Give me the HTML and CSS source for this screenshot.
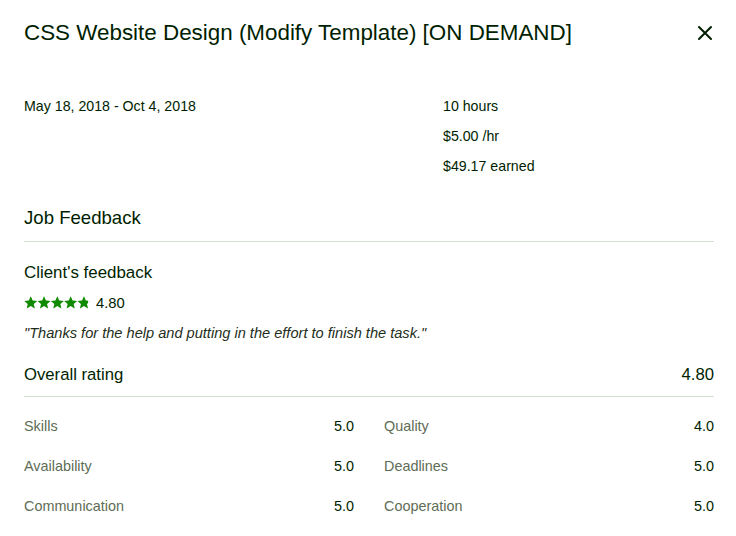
FILE: index.html
```html
<!DOCTYPE html>
<html>
<head>
<meta charset="utf-8">
<link rel="stylesheet" href="styles.css">
</head>
<body>
<div class="modal">
  <div class="header">
    <h1 class="title">CSS Website Design (Modify Template) [ON DEMAND]</h1>
    <button class="close" aria-label="Close">
      <svg width="16" height="16" viewBox="0 0 16 16"><path d="M2 2 L14 14 M14 2 L2 14" stroke="#001e00" stroke-width="2" stroke-linecap="round"/></svg>
    </button>
  </div>

  <div class="summary">
    <div class="dates">May 18, 2018 - Oct 4, 2018</div>
    <div class="stats">
      <div class="stat"><strong>10</strong> hours</div>
      <div class="stat"><strong>$5.00</strong> /hr</div>
      <div class="stat"><strong>$49.17</strong> earned</div>
    </div>
  </div>

  <h2 class="section-title">Job Feedback</h2>

  <div class="feedback">
    <h3 class="sub-title">Client's feedback</h3>
    <div class="rating">
      <span class="stars">
        <svg width="67" height="14" viewBox="0 0 67 14">
          <defs>
            <symbol id="star" viewBox="0 0 24 24"><path d="M12 0.5l3.3 7.5 8.2.7-6.2 5.4 1.9 8.1L12 17.9l-7.2 4.3 1.9-8.1-6.2-5.4 8.2-.7z"/></symbol>
            <clipPath id="partial"><rect x="0" y="0" width="64" height="14"/></clipPath>
          </defs>
          <g fill="#e0e6e0">
            <use href="#star" x="0" y="0" width="13.5" height="13.5"/>
            <use href="#star" x="13.3" y="0" width="13.5" height="13.5"/>
            <use href="#star" x="26.6" y="0" width="13.5" height="13.5"/>
            <use href="#star" x="39.9" y="0" width="13.5" height="13.5"/>
            <use href="#star" x="53.2" y="0" width="13.5" height="13.5"/>
          </g>
          <g fill="#108a00" clip-path="url(#partial)">
            <use href="#star" x="0" y="0" width="13.5" height="13.5"/>
            <use href="#star" x="13.3" y="0" width="13.5" height="13.5"/>
            <use href="#star" x="26.6" y="0" width="13.5" height="13.5"/>
            <use href="#star" x="39.9" y="0" width="13.5" height="13.5"/>
            <use href="#star" x="53.2" y="0" width="13.5" height="13.5"/>
          </g>
        </svg>
      </span>
      <span class="score">4.80</span>
    </div>
    <p class="quote">"Thanks for the help and putting in the effort to finish the task."</p>
  </div>

  <div class="overall">
    <span>Overall rating</span>
    <span>4.80</span>
  </div>

  <div class="scores">
    <div class="score-row"><span class="label">Skills</span><span class="value">5.0</span></div>
    <div class="score-row"><span class="label">Quality</span><span class="value">4.0</span></div>
    <div class="score-row"><span class="label">Availability</span><span class="value">5.0</span></div>
    <div class="score-row"><span class="label">Deadlines</span><span class="value">5.0</span></div>
    <div class="score-row"><span class="label">Communication</span><span class="value">5.0</span></div>
    <div class="score-row"><span class="label">Cooperation</span><span class="value">5.0</span></div>
  </div>
</div>
</body>
</html>
```

FILE: styles.css
```css
* { box-sizing: border-box; }
html, body { margin: 0; padding: 0; background: #fff; }
body {
  font-family: "Liberation Sans", Arial, sans-serif;
  color: #001e00;
}
.modal {
  width: 736px;
  padding: 0 22px 0 24px;
}
.header {
  display: flex;
  justify-content: space-between;
  align-items: center;
  height: 65px;
}
.title {
  margin: 0;
  font-size: 22.4px;
  font-weight: 400;
}
.close {
  border: 0;
  background: none;
  padding: 0;
  width: 18px;
  height: 18px;
  display: flex;
  align-items: center;
  justify-content: center;
}
.summary {
  display: flex;
  padding-top: 30px;
  font-size: 14.2px;
}
.dates {
  width: 419px;
  line-height: 22px;
}
.stats {
  display: flex;
  flex-direction: column;
  gap: 8px;
}
.stat { line-height: 22px; }
.stat strong { font-weight: 400; }
.section-title {
  margin: 28px 0 0;
  font-size: 18.6px;
  font-weight: 400;
  line-height: 26px;
  padding-bottom: 10px;
  border-bottom: 1px solid #d5e0d5;
}
.feedback { padding-top: 19px; }
.sub-title {
  margin: 0;
  font-size: 16.9px;
  font-weight: 400;
  line-height: 24px;
}
.rating {
  display: flex;
  align-items: center;
  gap: 5px;
  margin-top: 6px;
  height: 24px;
}
.stars { display: flex; }
.score { font-size: 14.8px; }
.quote {
  margin: 6px 0 0;
  font-size: 14.6px;
  font-style: italic;
  color: #1e2e1a;
  line-height: 24px;
}
.overall {
  display: flex;
  justify-content: space-between;
  font-size: 16.7px;
  line-height: 24px;
  margin-top: 18px;
  padding-bottom: 9px;
  border-bottom: 1px solid #d5e0d5;
}
.scores {
  display: grid;
  grid-template-columns: 1fr 1fr;
  column-gap: 30px;
  row-gap: 18px;
  padding-top: 18px;
  font-size: 14.4px;
}
.score-row {
  display: flex;
  justify-content: space-between;
  line-height: 22px;
}
.label { color: #5e6d55; }
.value { color: #001e00; }
```
